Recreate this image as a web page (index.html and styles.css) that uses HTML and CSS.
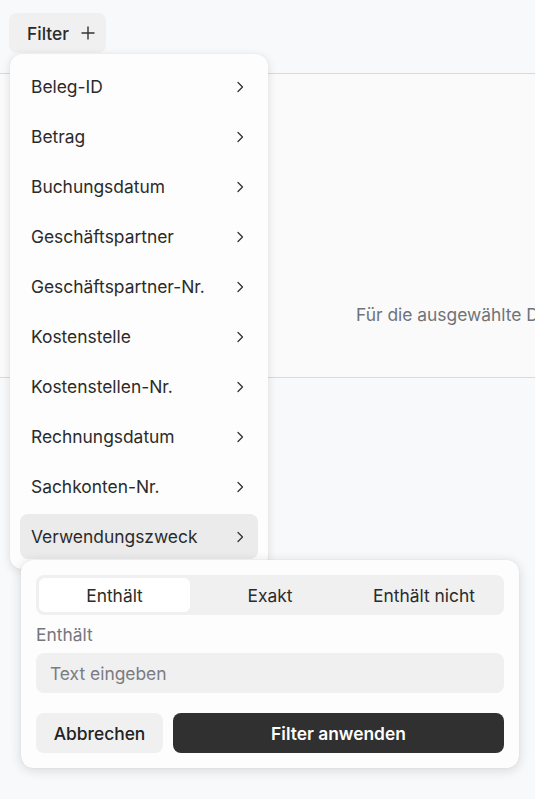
FILE: index.html
```html
<!DOCTYPE html>
<html lang="de">
<head>
<meta charset="utf-8">
<title>Filter</title>
<link rel="stylesheet" href="styles.css">
</head>
<body>
  <div class="toolbar">
    <button class="filter-btn">
      <span>Filter</span>
      <svg class="plus" width="14" height="14" viewBox="0 0 14 14" fill="none" stroke="currentColor" stroke-width="1.4" stroke-linecap="round"><path d="M7 1v12M1 7h12"/></svg>
    </button>
  </div>

  <section class="content">
    <p class="empty">Für die ausgewählte Datei sind keine Daten vorhanden</p>
  </section>

  <div class="menu">
    <div class="menu-item">Beleg-ID<svg class="chev" viewBox="0 0 8 12"><path d="M2 1.5l4.5 4.5L2 10.5"/></svg></div>
    <div class="menu-item">Betrag<svg class="chev" viewBox="0 0 8 12"><path d="M2 1.5l4.5 4.5L2 10.5"/></svg></div>
    <div class="menu-item">Buchungsdatum<svg class="chev" viewBox="0 0 8 12"><path d="M2 1.5l4.5 4.5L2 10.5"/></svg></div>
    <div class="menu-item">Geschäftspartner<svg class="chev" viewBox="0 0 8 12"><path d="M2 1.5l4.5 4.5L2 10.5"/></svg></div>
    <div class="menu-item">Geschäftspartner-Nr.<svg class="chev" viewBox="0 0 8 12"><path d="M2 1.5l4.5 4.5L2 10.5"/></svg></div>
    <div class="menu-item">Kostenstelle<svg class="chev" viewBox="0 0 8 12"><path d="M2 1.5l4.5 4.5L2 10.5"/></svg></div>
    <div class="menu-item">Kostenstellen-Nr.<svg class="chev" viewBox="0 0 8 12"><path d="M2 1.5l4.5 4.5L2 10.5"/></svg></div>
    <div class="menu-item">Rechnungsdatum<svg class="chev" viewBox="0 0 8 12"><path d="M2 1.5l4.5 4.5L2 10.5"/></svg></div>
    <div class="menu-item">Sachkonten-Nr.<svg class="chev" viewBox="0 0 8 12"><path d="M2 1.5l4.5 4.5L2 10.5"/></svg></div>
    <div class="menu-item active">Verwendungszweck<svg class="chev" viewBox="0 0 8 12"><path d="M2 1.5l4.5 4.5L2 10.5"/></svg></div>
  </div>

  <div class="popover">
    <div class="tabs">
      <div class="tab selected">Enthält</div>
      <div class="tab">Exakt</div>
      <div class="tab">Enthält nicht</div>
    </div>
    <label class="field-label">Enthält</label>
    <div class="input">Text eingeben</div>
    <div class="actions">
      <button class="btn btn-secondary">Abbrechen</button>
      <button class="btn btn-primary">Filter anwenden</button>
    </div>
  </div>
</body>
</html>
```

FILE: styles.css
```css
* {
  box-sizing: border-box;
}

html, body {
  margin: 0;
  height: 100%;
}

body {
  background: #f8f9fb;
  font-family: Inter, "Liberation Sans", sans-serif;
  font-size: 17.4px;
  color: #2b2b2b;
  overflow: hidden;
  position: relative;
}

.toolbar {
  height: 73px;
  padding: 13px 0 0 9px;
}

.filter-btn {
  display: flex;
  align-items: center;
  gap: 12px;
  width: 97px;
  height: 40px;
  padding: 0 0 0 18px;
  border: 0;
  border-radius: 8px;
  background: #f0f0f1;
  font: 500 17.4px Inter, "Liberation Sans", sans-serif;
  color: #2b2b2b;
}

.plus {
  color: #333;
}

.content {
  height: 305px;
  border-top: 1px solid #dadada;
  border-bottom: 1px solid #dadada;
  background: #fafafa;
  padding: 230px 0 0 356px;
  white-space: nowrap;
  overflow: hidden;
}

.empty {
  margin: 0;
  color: #6f737a;
}

/* column picker */
.menu {
  position: absolute;
  left: 10px;
  top: 54px;
  width: 258px;
  padding: 10px 10px;
  background: #fdfdfd;
  border-radius: 12px;
  box-shadow: 0 2px 10px rgba(0, 0, 0, 0.12), 0 0 1px rgba(0, 0, 0, 0.1);
  display: flex;
  flex-direction: column;
  gap: 5px;
}

.menu-item {
  height: 45px;
  display: flex;
  align-items: center;
  justify-content: space-between;
  padding: 0 14px 0 11px;
  border-radius: 8px;
  color: #2b2b2b;
}

.menu-item.active {
  background: #ebebeb;
}

.chev {
  width: 8px;
  height: 12px;
  fill: none;
  stroke: #333;
  stroke-width: 1.3;
  stroke-linecap: round;
  stroke-linejoin: round;
}

/* condition popover */
.popover {
  position: absolute;
  left: 21px;
  top: 560px;
  width: 498px;
  padding: 15px 15px 15px;
  background: #fdfdfd;
  border-radius: 12px;
  box-shadow: 0 2px 12px rgba(0, 0, 0, 0.14), 0 0 1px rgba(0, 0, 0, 0.12);
}

.tabs {
  display: grid;
  grid-template-columns: repeat(3, 1fr);
  height: 40px;
  padding: 3px;
  background: #f0f0f0;
  border-radius: 8px;
}

.tab {
  display: flex;
  align-items: center;
  justify-content: center;
  border-radius: 6px;
  color: #2b2b2b;
}

.tab.selected {
  background: #ffffff;
  margin-right: 3px;
}

.field-label {
  display: block;
  margin: 10px 0 0;
  line-height: 19px;
  color: #75777c;
}

.input {
  margin-top: 9px;
  height: 40px;
  display: flex;
  align-items: center;
  padding: 0 14px;
  background: #f0f0f0;
  border-radius: 8px;
  color: #797c82;
}

.actions {
  display: flex;
  gap: 10px;
  margin-top: 20px;
}

.btn {
  height: 40px;
  border: 0;
  border-radius: 8px;
  font: 500 17.4px Inter, "Liberation Sans", sans-serif;
}

.btn-secondary {
  width: 127px;
  background: #f0f0f0;
  color: #222;
}

.btn-primary {
  flex: 1;
  background: #303030;
  color: #fff;
  font-weight: 600;
}
```
